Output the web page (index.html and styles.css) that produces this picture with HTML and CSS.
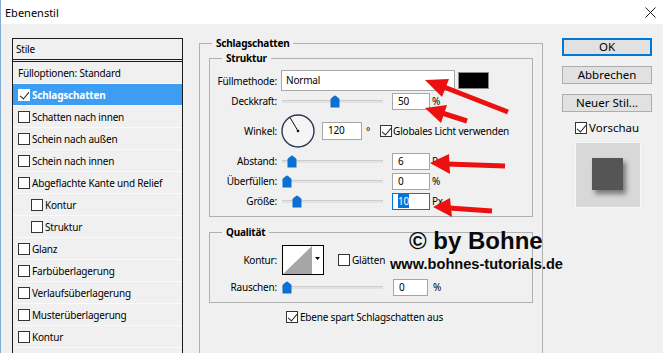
FILE: index.html
```html
<!DOCTYPE html>
<html lang="de">
<head>
    <meta charset="UTF-8">
    <title>Ebenenstil</title>
    <link rel="stylesheet" href="styles.css">
</head>
<body>
<div class="window">
    <div class="titlebar">
        <span class="title">Ebenenstil</span>
        <svg class="close" width="11" height="11" viewBox="0 0 11 11"><path d="M0.5 0.5L10.5 10.5M10.5 0.5L0.5 10.5" stroke="#1a1a1a" stroke-width="1"/></svg>
    </div>

    <div class="dialog">
        <div class="styles-list">
            <div class="list-head">Stile</div>
            <div class="list-item">Fülloptionen: Standard</div>
            <div class="list-item selected"><span class="check on"></span>Schlagschatten</div>
            <div class="list-item"><span class="check"></span>Schatten nach innen</div>
            <div class="list-item"><span class="check"></span>Schein nach außen</div>
            <div class="list-item"><span class="check"></span>Schein nach innen</div>
            <div class="list-item"><span class="check"></span>Abgeflachte Kante und Relief</div>
            <div class="list-item sub"><span class="check"></span>Kontur</div>
            <div class="list-item sub"><span class="check"></span>Struktur</div>
            <div class="list-item"><span class="check"></span>Glanz</div>
            <div class="list-item"><span class="check"></span>Farbüberlagerung</div>
            <div class="list-item"><span class="check"></span>Verlaufsüberlagerung</div>
            <div class="list-item"><span class="check"></span>Musterüberlagerung</div>
            <div class="list-item"><span class="check"></span>Kontur</div>
        </div>

        <div class="settings">
            <fieldset class="group outer">
                <legend>Schlagschatten</legend>

                <fieldset class="group inner struktur">
                    <legend>Struktur</legend>
                    <div class="form-grid struktur-grid">
                        <label>Füllmethode:</label>
                        <div class="ctl">
                            <div class="select">Normal
                                <svg class="chevron" width="7" height="4" viewBox="0 0 7 4"><path d="M0.5 0.5L3.5 3.5L6.5 0.5" fill="none" stroke="#777" stroke-width="1"/></svg>
                            </div>
                            <span class="swatch"></span>
                        </div>

                        <label>Deckkraft:</label>
                        <div class="ctl">
                            <div class="slider"><svg class="thumb" style="left:48px" width="10" height="13" viewBox="0 0 10 13"><path d="M5 0.5Q6 0.5 9.5 4V12.5H0.5V4Q4 0.5 5 0.5Z" fill="#0c6fd2"/></svg></div>
                            <span class="num">50</span><span class="unit">%</span>
                        </div>

                        <label>Winkel:</label>
                        <div class="ctl">
                            <svg class="dial" width="34" height="34" viewBox="0 0 34 34">
                                <circle cx="17" cy="17" r="16" fill="#f5f5f5" stroke="#2a3852" stroke-width="1.4"/>
                                <line x1="17" y1="17" x2="9" y2="3.5" stroke="#111" stroke-width="1"/>
                                <circle cx="17" cy="17" r="1.3" fill="#111"/>
                            </svg>
                            <span class="num wide">120</span><span class="deg">°</span>
                            <span class="check on light-gap"></span><span>Globales Licht verwenden</span>
                        </div>

                        <label>Abstand:</label>
                        <div class="ctl">
                            <div class="slider"><svg class="thumb" style="left:5px" width="10" height="13" viewBox="0 0 10 13"><path d="M5 0.5Q6 0.5 9.5 4V12.5H0.5V4Q4 0.5 5 0.5Z" fill="#0c6fd2"/></svg></div>
                            <span class="num">6</span><span class="unit">Px</span>
                        </div>

                        <label>Überfüllen:</label>
                        <div class="ctl">
                            <div class="slider"><svg class="thumb" style="left:0px" width="10" height="13" viewBox="0 0 10 13"><path d="M5 0.5Q6 0.5 9.5 4V12.5H0.5V4Q4 0.5 5 0.5Z" fill="#0c6fd2"/></svg></div>
                            <span class="num">0</span><span class="unit">%</span>
                        </div>

                        <label>Größe:</label>
                        <div class="ctl">
                            <div class="slider"><svg class="thumb" style="left:10px" width="10" height="13" viewBox="0 0 10 13"><path d="M5 0.5Q6 0.5 9.5 4V12.5H0.5V4Q4 0.5 5 0.5Z" fill="#0c6fd2"/></svg></div>
                            <span class="num focus"><span class="sel">10</span></span><span class="unit">Px</span>
                        </div>
                    </div>
                </fieldset>

                <fieldset class="group inner qualitaet">
                    <legend>Qualität</legend>
                    <div class="form-grid qualitaet-grid">
                        <label>Kontur:</label>
                        <div class="ctl">
                            <svg class="contour" width="42" height="30" viewBox="0 0 42 30">
                                <rect x="0.5" y="0.5" width="41" height="29" fill="#fff" stroke="#000"/>
                                <polygon points="1,29 30,1 30,29" fill="#a6a6a6"/>
                                <polygon points="33,12 38,12 35.5,15" fill="#000"/>
                            </svg>
                            <span class="check glatt"></span><span>Glätten</span>
                        </div>

                        <label>Rauschen:</label>
                        <div class="ctl">
                            <div class="slider"><svg class="thumb" style="left:0px" width="10" height="13" viewBox="0 0 10 13"><path d="M5 0.5Q6 0.5 9.5 4V12.5H0.5V4Q4 0.5 5 0.5Z" fill="#0c6fd2"/></svg></div>
                            <span class="num short">0</span><span class="unit far">%</span>
                        </div>
                    </div>
                </fieldset>

                <div class="knockout"><span class="check on"></span><span>Ebene spart Schlagschatten aus</span></div>
            </fieldset>
        </div>

        <div class="buttons">
            <div class="btn default">OK</div>
            <div class="btn">Abbrechen</div>
            <div class="btn">Neuer Stil...</div>
            <div class="preview-toggle"><span class="check on"></span><span>Vorschau</span></div>
            <div class="preview"><div class="preview-square"></div></div>
        </div>
    </div>

    <div class="watermark">
        <div class="wm-big">© by Bohne</div>
        <div class="wm-url">www.bohnes-tutorials.de</div>
    </div>

    <svg class="arrows" width="663" height="353" viewBox="0 0 663 353">
        <g fill="#ec1111" stroke="#ec1111">
            <line x1="508" y1="112" x2="444" y2="87" stroke-width="5"/>
            <polygon points="425,80 449,79 442,97" stroke="none"/>
            <line x1="467" y1="121" x2="442" y2="113" stroke-width="5"/>
            <polygon points="425,108 447,105 441,123" stroke="none"/>
            <line x1="505" y1="166" x2="447" y2="164" stroke-width="5"/>
            <polygon points="430,163 449,154 450,174" stroke="none"/>
            <line x1="492" y1="211" x2="449" y2="208" stroke-width="5"/>
            <polygon points="433,207 450,198 452,217" stroke="none"/>
        </g>
    </svg>
</div>
</body>
</html>
```

FILE: styles.css
```css
* {
    box-sizing: border-box;
}
body {
    margin: 0;
    background-color: #f0f0f0;
    font-family: "Noto Sans", sans-serif;
    font-size: 10px;
    letter-spacing: -0.2px;
    color: #000;
    overflow: hidden;
}
.window {
    position: relative;
    width: 663px;
    height: 353px;
    border-left: 1px solid #82aad6;
    overflow: hidden;
}
.titlebar {
    height: 24px;
    background-color: #fff;
    display: flex;
    align-items: center;
    justify-content: space-between;
    padding: 0 7px 0 4px;
}
.title {
    font-size: 11px;
    letter-spacing: 0;
}
.dialog {
    display: flex;
    align-items: flex-start;
    padding: 14px 0 0 11px;
}

/* left list of styles */
.styles-list {
    flex: none;
    width: 171px;
    height: 330px;
    border: 1px solid #1c1c1c;
    border-bottom: none;
}
.list-head {
    height: 23px;
    line-height: 20px;
    padding-left: 3px;
    border-bottom: 3px double #1c1c1c;
}
.list-item {
    height: 22px;
    display: flex;
    align-items: center;
    padding-left: 5px;
    border-bottom: 1px solid #fafafa;
}
.list-item.sub {
    padding-left: 18px;
}
.list-item.selected {
    background-color: #3c9df2;
    color: #fff;
    font-weight: bold;
}
.list-item.selected .check {
    border-color: #fff;
}
.check {
    flex: none;
    position: relative;
    display: inline-block;
    width: 12px;
    height: 12px;
    margin-right: 2px;
    border: 1px solid #333;
    background-color: #fff;
}
.check.on::after {
    content: "";
    position: absolute;
    left: 3px;
    top: 0;
    width: 4px;
    height: 8px;
    border: solid #222;
    border-width: 0 1px 1px 0;
    transform: rotate(40deg);
}

/* settings column */
.settings {
    flex: none;
    width: 344px;
    margin-left: 16px;
    margin-top: -2px;
}
fieldset.group {
    margin: 0;
    min-width: 0;
    border: 1px solid #b0b0b0;
}
fieldset.group legend {
    font-weight: bold;
    line-height: 14px;
    padding: 0 4px;
}
.outer {
    height: 340px;
    padding: 1px 9px 0 9px;
}
.outer > legend {
    margin-left: 3px;
}
.inner {
    padding: 5px 0 5px 0;
}
.inner > legend {
    margin-left: 12px;
}
fieldset.qualitaet {
    margin-top: 8px;
    padding-top: 3px;
}
.form-grid {
    display: grid;
    grid-template-columns: 67px 1fr;
    column-gap: 4px;
}
.struktur-grid {
    grid-template-rows: 21px 20px 40px 20px 20px 20px;
}
.qualitaet-grid {
    grid-template-rows: 35px 20px;
}
.form-grid label {
    align-self: center;
    text-align: right;
}
.ctl {
    display: flex;
    align-items: center;
}
.select {
    position: relative;
    width: 174px;
    height: 21px;
    padding-left: 4px;
    line-height: 19px;
    background-color: #fff;
    border: 1px solid #a8a8a8;
}
.chevron {
    position: absolute;
    right: 6px;
    top: 9px;
}
.swatch {
    width: 31px;
    height: 17px;
    margin-left: 3px;
    background-color: #000;
    border: 1px solid #8a8a8a;
}
.slider {
    position: relative;
    width: 101px;
    height: 3px;
    margin-left: 1px;
    background-color: #e2e2e2;
    border-top: 1px solid #cdcdcd;
}
.thumb {
    position: absolute;
    top: -6px;
}
.num {
    width: 38px;
    height: 17px;
    margin-left: 9px;
    padding-left: 5px;
    line-height: 15px;
    background-color: #fff;
    border: 1px solid #a6a6a6;
}
.num.wide {
    width: 40px;
    height: 18px;
    margin-left: 7px;
}
.num.short {
    width: 35px;
    margin-left: 10px;
}
.num.focus {
    border-color: #0078d7;
}
.sel {
    background-color: #0a74d6;
    color: #fff;
}
.unit {
    margin-left: 2px;
}
.unit.far {
    margin-left: 5px;
}
.deg {
    align-self: flex-start;
    margin: 13px 0 0 4px;
}
.light-gap {
    margin-left: 10px;
    margin-right: 1px;
}
.dial {
    flex: none;
}
.contour {
    flex: none;
    margin-left: 1px;
}
.glatt {
    margin-left: 14px;
}
.knockout {
    display: flex;
    align-items: center;
    height: 20px;
    margin-top: 4px;
    padding-left: 77px;
}

/* buttons on the right */
.buttons {
    flex: none;
    width: 90px;
    margin-left: 19px;
    display: flex;
    flex-direction: column;
    font-size: 11.5px;
    letter-spacing: 0;
}
.btn {
    height: 18px;
    margin-bottom: 10px;
    line-height: 16px;
    text-align: center;
    background-color: #e1e1e1;
    border: 1px solid #adadad;
}
.btn.default {
    border-color: #0078d7;
    box-shadow: inset 0 0 0 1px #0078d7;
}
.preview-toggle {
    display: flex;
    align-items: center;
    height: 13px;
    margin-top: -1px;
    padding-left: 13px;
}
.preview {
    width: 66px;
    height: 66px;
    margin: 8px 0 0 13px;
    padding: 15px 0 0 16px;
    background-color: #d8d8d8;
    border: 1px solid #f8f8f8;
}
.preview-square {
    width: 31px;
    height: 32px;
    background-color: #555;
    box-shadow: 3px 4px 5px rgba(0, 0, 0, 0.45);
}

/* overlays drawn on top of the dialog */
.watermark {
    position: absolute;
    left: 389px;
    top: 229px;
    font-family: "Liberation Sans", Arial, sans-serif;
    font-weight: bold;
    letter-spacing: 0;
    color: #0a0a0a;
}
.wm-big {
    font-size: 24px;
    line-height: 24px;
    margin-left: 19px;
}
.wm-url {
    font-size: 14.6px;
    line-height: 15px;
    margin-top: 4px;
}
.arrows {
    position: absolute;
    left: -1px;
    top: 0;
    pointer-events: none;
}
```
